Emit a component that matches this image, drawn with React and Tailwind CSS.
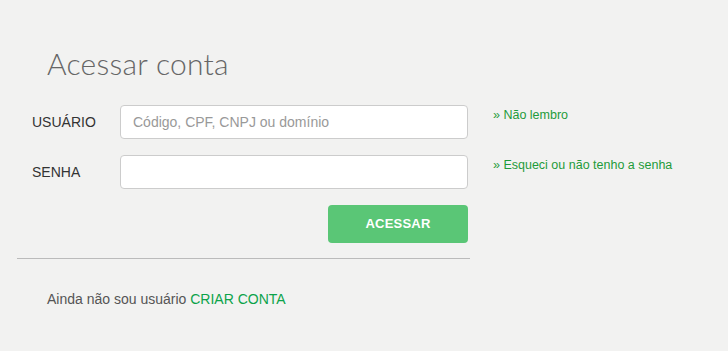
export default function App() {
  return (
    <div className="min-h-screen bg-[#f2f2f1] font-['Liberation_Sans',Arial,sans-serif]">
      <div className="flex pl-[17px] pt-[45px]">
        <div className="w-[453px]">
          <h1 className="pl-[30px] text-[30px] leading-[36px] font-light tracking-[0.25px] text-[#666] font-['Lato','Open_Sans',sans-serif]">Acessar conta</h1>
          <form className="mt-[24px]">
            <div className="flex items-center">
              <label className="w-[103px] pl-[15px] pt-[1px] text-[14px] text-[#333]">USUÁRIO</label>
              <input
                type="text"
                placeholder="Código, CPF, CNPJ ou domínio"
                className="h-[34px] w-[348px] rounded-[4px] border border-[#ccc] bg-white px-[12px] text-[14px] text-[#555] placeholder:text-[#999] outline-none"
              />
            </div>
            <div className="mt-[16px] flex items-center">
              <label className="w-[103px] pl-[15px] pt-[1px] text-[14px] text-[#333]">SENHA</label>
              <input
                type="password"
                className="h-[34px] w-[348px] rounded-[4px] border border-[#ccc] bg-white px-[12px] text-[14px] text-[#555] outline-none"
              />
            </div>
            <div className="mt-[16px] flex justify-end pr-[2px]">
              <button
                type="button"
                className="h-[38px] w-[140px] rounded-[4px] bg-[#5ac676] text-[13px] font-bold tracking-[0.2px] text-white"
              >
                ACESSAR
              </button>
            </div>
          </form>
          <hr className="mt-[15px] border-0 border-t border-[#bbb]" />
          <p className="mt-[30px] pl-[30px] text-[14px] leading-[20px] text-[#555]">
            Ainda não sou usuário <a className="text-[#0ca34a]" href="#">CRIAR CONTA</a>
          </p>
        </div>
        <div className="ml-[23px] pt-[61px] text-[12.5px] leading-[18px] text-[#1e9b3a]">
          <div className="h-[50px]"><a href="#">» Não lembro</a></div>
          <div className="h-[50px]"><a href="#">» Esqueci ou não tenho a senha</a></div>
        </div>
      </div>
    </div>
  )
}
